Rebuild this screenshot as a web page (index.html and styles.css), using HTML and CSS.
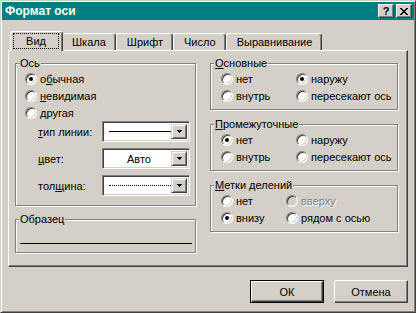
FILE: index.html
```html
<!DOCTYPE html>
<html lang="ru">
<head>
    <meta charset="UTF-8">
    <title>Формат оси</title>
    <link rel="stylesheet" href="styles.css">
</head>
<body>
    <div class="window">
        <div class="titlebar">
            <span class="title">Формат оси</span>
            <div class="title-buttons">
                <span class="tbtn">?</span>
                <span class="tbtn">
                    <svg width="8" height="7" viewBox="0 0 8 7"><path d="M0 0h2v1H0zM6 0h2v1H6zM1 1h2v1H1zM5 1h2v1H5zM2 2h4v1H2zM3 3h2v1H3zM2 4h4v1H2zM1 5h2v1H1zM5 5h2v1H5zM0 6h2v1H0zM6 6h2v1H6z" fill="#000"/></svg>
                </span>
            </div>
        </div>

        <div class="content">
            <div class="tabs">
                <div class="tab active"><span class="focus">Вид</span></div>
                <div class="tab">Шкала</div>
                <div class="tab">Шрифт</div>
                <div class="tab">Число</div>
                <div class="tab">Выравнивание</div>
            </div>

            <div class="panel">
                <div class="col col-left">
                    <div class="group">
                        <div class="legend">Ось</div>
                        <div class="group-body axis-body">
                            <div class="radio-row"><span class="radio checked"></span><span>о<u>б</u>ычная</span></div>
                            <div class="radio-row"><span class="radio"></span><span><u>н</u>евидимая</span></div>
                            <div class="radio-row"><span class="radio"></span><span>другая</span></div>

                            <div class="combo-row">
                                <span class="combo-label"><u>т</u>ип линии:</span>
                                <div class="combo">
                                    <div class="combo-field"><span class="line-solid"></span></div>
                                    <span class="drop"><svg width="5" height="3" viewBox="0 0 5 3"><path d="M0 0h5v1H0zM1 1h3v1H1zM2 2h1v1H2z" fill="#000"/></svg></span>
                                </div>
                            </div>
                            <div class="combo-row">
                                <span class="combo-label"><u>ц</u>вет:</span>
                                <div class="combo">
                                    <div class="combo-field combo-text">Авто</div>
                                    <span class="drop"><svg width="5" height="3" viewBox="0 0 5 3"><path d="M0 0h5v1H0zM1 1h3v1H1zM2 2h1v1H2z" fill="#000"/></svg></span>
                                </div>
                            </div>
                            <div class="combo-row">
                                <span class="combo-label">тол<u>щ</u>ина:</span>
                                <div class="combo">
                                    <div class="combo-field"><span class="line-dotted"></span></div>
                                    <span class="drop"><svg width="5" height="3" viewBox="0 0 5 3"><path d="M0 0h5v1H0zM1 1h3v1H1zM2 2h1v1H2z" fill="#000"/></svg></span>
                                </div>
                            </div>
                        </div>
                    </div>

                    <div class="group">
                        <div class="legend">Образец</div>
                        <div class="group-body sample-body">
                            <div class="sample-line"></div>
                        </div>
                    </div>
                </div>

                <div class="col col-right">
                    <div class="group">
                        <div class="legend"><u>О</u>сновные</div>
                        <div class="group-body radio-grid">
                            <div class="radio-row"><span class="radio"></span><span>нет</span></div>
                            <div class="radio-row"><span class="radio checked"></span><span>наружу</span></div>
                            <div class="radio-row"><span class="radio"></span><span>внутрь</span></div>
                            <div class="radio-row"><span class="radio"></span><span>пересекают ось</span></div>
                        </div>
                    </div>

                    <div class="group">
                        <div class="legend"><u>П</u>ромежуточные</div>
                        <div class="group-body radio-grid">
                            <div class="radio-row"><span class="radio checked"></span><span>нет</span></div>
                            <div class="radio-row"><span class="radio"></span><span>наружу</span></div>
                            <div class="radio-row"><span class="radio"></span><span>внутрь</span></div>
                            <div class="radio-row"><span class="radio"></span><span>пересекают ось</span></div>
                        </div>
                    </div>

                    <div class="group">
                        <div class="legend"><u>М</u>етки делений</div>
                        <div class="group-body radio-grid narrow">
                            <div class="radio-row"><span class="radio"></span><span>нет</span></div>
                            <div class="radio-row disabled"><span class="radio"></span><span>вверху</span></div>
                            <div class="radio-row"><span class="radio checked"></span><span>внизу</span></div>
                            <div class="radio-row"><span class="radio"></span><span>рядом с осью</span></div>
                        </div>
                    </div>
                </div>
            </div>

            <div class="actions">
                <button class="btn default">ОК</button>
                <button class="btn">Отмена</button>
            </div>
        </div>
    </div>
</body>
</html>
```

FILE: styles.css
```css
body {
    margin: 0;
    background-color: #d4d0c8;
    font: 11px "Liberation Sans", Arial, sans-serif;
    color: #000;
    overflow: hidden;
}
.window {
    width: 416px;
    height: 313px;
    box-sizing: border-box;
    padding: 1px;
    border: 1px solid;
    border-color: #d4d0c8 #404040 #404040 #d4d0c8;
    box-shadow: inset 1px 1px 0 #fff, inset -1px -1px 0 #808080;
}
.titlebar {
    height: 18px;
    background-color: #008080;
    display: flex;
    align-items: center;
    padding: 0 2px 0 3px;
}
.title {
    color: #fff;
    font-weight: bold;
    font-size: 12px;
    flex: 1;
}
.title-buttons {
    display: flex;
    gap: 2px;
}
.tbtn {
    width: 16px;
    height: 14px;
    box-sizing: border-box;
    background-color: #d4d0c8;
    border: 1px solid;
    border-color: #fff #404040 #404040 #fff;
    box-shadow: inset -1px -1px 0 #808080;
    display: flex;
    align-items: center;
    justify-content: center;
    font-weight: bold;
    font-size: 11px;
    line-height: 1;
}
.content {
    padding: 0 6px;
}
.tabs {
    display: flex;
    align-items: flex-end;
    height: 19px;
    margin-top: 11px;
    padding-left: 4px;
}
.tab {
    height: 17px;
    box-sizing: border-box;
    padding: 0 9px 0 10px;
    border: 1px solid;
    border-bottom: none;
    border-color: #fff #404040 transparent #fff;
    border-radius: 3px 3px 0 0;
    box-shadow: inset -1px 0 0 #808080;
    display: flex;
    align-items: center;
}
.tab.active {
    height: 20px;
    margin: 0 -2px -1px -2px;
    padding: 1px 3px 0 2px;
    align-items: flex-start;
    background-color: #d4d0c8;
    position: relative;
    z-index: 1;
}
.focus {
    width: 46px;
    height: 16px;
    box-sizing: border-box;
    outline: 1px dotted #000;
    outline-offset: -1px;
    display: flex;
    align-items: center;
    justify-content: center;
}
.panel {
    height: 217px;
    box-sizing: border-box;
    border: 1px solid;
    border-color: #fff #404040 #404040 #fff;
    box-shadow: inset -1px -1px 0 #808080;
    padding: 6px 0 0 6px;
    display: flex;
    gap: 14px;
}
.col-left {
    width: 181px;
}
.col-right {
    width: 188px;
}
.group {
    margin-top: 6px;
    border: 1px solid #808080;
    box-shadow: inset 1px 1px 0 #fff, 1px 1px 0 #fff;
}
.group + .group {
    margin-top: 14px;
}
.col-left .group + .group {
    margin-top: 13px;
}
.legend {
    width: fit-content;
    margin: -7px 0 0 3px;
    padding: 0 1px;
    line-height: 13px;
    background-color: #d4d0c8;
}
.group-body {
    padding: 0 0 5px 10px;
}
.axis-body {
    padding: 0 0 9px 9px;
}
.radio-row {
    height: 17px;
    display: flex;
    align-items: center;
    gap: 3px;
    white-space: nowrap;
}
.radio {
    width: 12px;
    height: 12px;
    box-sizing: border-box;
    border-radius: 50%;
    border: 1px solid;
    border-color: #808080 #fff #fff #808080;
    box-shadow: inset 1px 1px 0 #404040, inset -1px -1px 0 #d4d0c8;
    background-color: #fff;
    display: flex;
    align-items: center;
    justify-content: center;
    flex: none;
}
.radio.checked::after {
    content: "";
    width: 4px;
    height: 4px;
    border-radius: 50%;
    background-color: #000;
}
.disabled {
    color: #808080;
    text-shadow: 1px 1px 0 #fff;
}
.disabled .radio {
    background-color: #d4d0c8;
}
.radio-grid {
    display: grid;
    grid-template-columns: 75px auto;
}
.radio-grid.narrow {
    grid-template-columns: 65px auto;
}
.combo-row {
    display: flex;
    align-items: center;
    padding-left: 13px;
    margin-top: 6px;
}
.radio-row + .combo-row {
    margin-top: 0;
}
.combo-label {
    width: 64px;
}
.combo {
    width: 88px;
    height: 21px;
    box-sizing: border-box;
    padding: 2px;
    border: 1px solid;
    border-color: #808080 #fff #fff #808080;
    box-shadow: inset 1px 1px 0 #404040, inset -1px -1px 0 #d4d0c8;
    background-color: #fff;
    display: flex;
}
.combo-field {
    flex: 1;
    display: flex;
    align-items: center;
    padding-left: 4px;
}
.combo-text {
    justify-content: center;
    padding-left: 2px;
}
.line-solid {
    flex: 1;
    height: 1px;
    background-color: #000;
}
.line-dotted {
    flex: 1;
    border-top: 1px dotted #000;
}
.drop {
    width: 16px;
    box-sizing: border-box;
    background-color: #d4d0c8;
    border: 1px solid;
    border-color: #d4d0c8 #404040 #404040 #d4d0c8;
    box-shadow: inset 1px 1px 0 #fff, inset -1px -1px 0 #808080;
    display: flex;
    align-items: center;
    justify-content: center;
}
.sample-body {
    padding: 17px 3px 8px 4px;
}
.sample-line {
    height: 1px;
    background-color: #000;
}
.actions {
    display: flex;
    justify-content: flex-end;
    gap: 10px;
    margin-top: 13px;
}
.btn {
    width: 74px;
    height: 23px;
    box-sizing: border-box;
    font: inherit;
    color: #000;
    background-color: #d4d0c8;
    border: 1px solid;
    border-color: #fff #404040 #404040 #fff;
    box-shadow: inset -1px -1px 0 #808080;
    padding: 0;
}
.btn.default {
    border-color: #000;
    box-shadow: inset 1px 1px 0 #fff, inset -1px -1px 0 #404040, inset -2px -2px 0 #808080;
}
```
